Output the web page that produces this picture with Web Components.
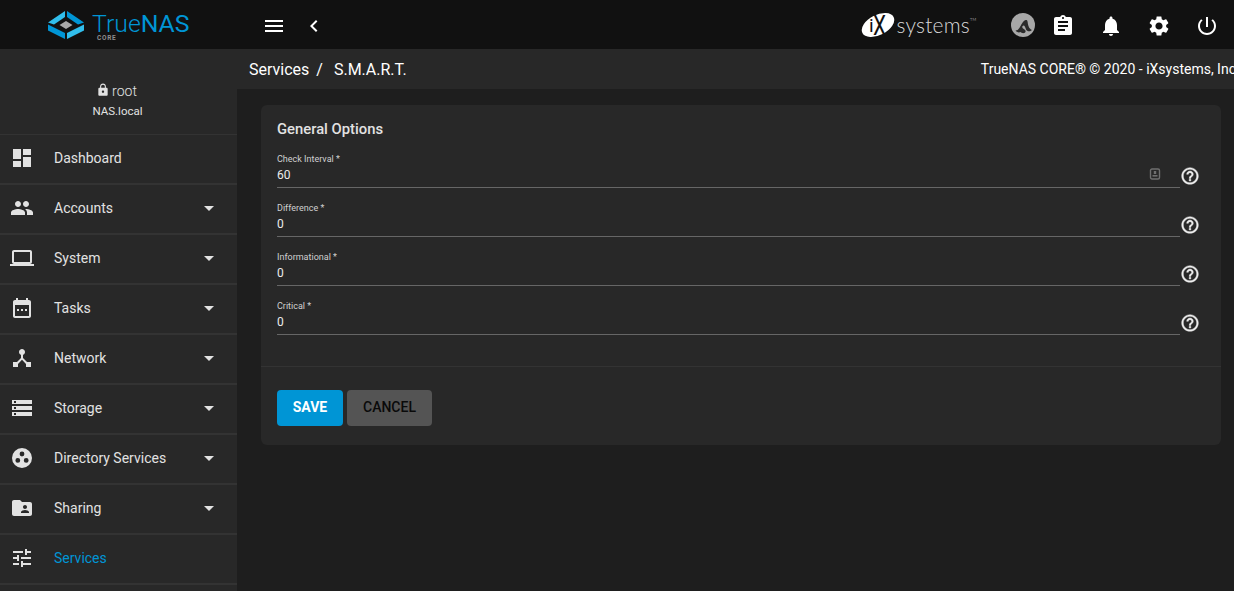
<!DOCTYPE html>
<html lang="en">
<head>
<meta charset="utf-8">
<title>TrueNAS - S.M.A.R.T.</title>
<style>
  html, body { margin: 0; height: 100%; overflow: hidden; background: #1e1e1e; }
  body { font-family: Roboto, "Liberation Sans", sans-serif; }
</style>
</head>
<body>
<app-shell>
  <top-bar slot="top"></top-bar>
  <side-nav slot="side">
    <nav-item icon="dashboard">Dashboard</nav-item>
    <nav-item icon="people" arrow>Accounts</nav-item>
    <nav-item icon="laptop" arrow>System</nav-item>
    <nav-item icon="event" arrow>Tasks</nav-item>
    <nav-item icon="hub" arrow>Network</nav-item>
    <nav-item icon="storage" arrow>Storage</nav-item>
    <nav-item icon="directory" arrow>Directory Services</nav-item>
    <nav-item icon="folder" arrow>Sharing</nav-item>
    <nav-item icon="tune" active>Services</nav-item>
  </side-nav>
  <page-header slot="head"></page-header>
  <form-card slot="body" heading="General Options">
    <form-field label="Check Interval *" value="60" badge></form-field>
    <form-field label="Difference *" value="0"></form-field>
    <form-field label="Informational *" value="0"></form-field>
    <form-field label="Critical *" value="0"></form-field>
    <form-button slot="actions" kind="primary">SAVE</form-button>
    <form-button slot="actions">CANCEL</form-button>
  </form-card>
</app-shell>

<script>
// Material icon paths used across the page
const ICONS = {
  dashboard: 'M3 13h8V3H3v10zm0 8h8v-6H3v6zm10 0h8V11h-8v10zm0-18v6h8V3h-8z',
  people: 'M16 11c1.66 0 2.99-1.34 2.99-3S17.66 5 16 5c-1.66 0-3 1.34-3 3s1.34 3 3 3zm-8 0c1.66 0 2.99-1.34 2.99-3S9.66 5 8 5C6.34 5 5 6.34 5 8s1.34 3 3 3zm0 2c-2.33 0-7 1.17-7 3.5V19h14v-2.5c0-2.33-4.67-3.5-7-3.5zm8 0c-.29 0-.62.02-.97.05 1.16.84 1.97 1.97 1.97 3.45V19h6v-2.5c0-2.33-4.67-3.5-7-3.5z',
  laptop: 'M20 18c1.1 0 1.99-.9 1.99-2L22 6c0-1.1-.9-2-2-2H4c-1.1 0-2 .9-2 2v10c0 1.1.9 2 2 2H0v2h24v-2h-4zM4 6h16v10H4V6z',
  event: 'M9 13H7v2h2v-2zm4 0h-2v2h2v-2zm4 0h-2v2h2v-2zm2-9h-1V2h-2v2H8V2H6v2H5c-1.11 0-1.99.9-1.99 2L3 20c0 1.1.89 2 2 2h14c1.1 0 2-.9 2-2V6c0-1.1-.9-2-2-2zm0 16H5V9h14v11z',
  hub: 'M17 16l-4-4V8.82C14.16 8.4 15 7.3 15 6c0-1.66-1.34-3-3-3S9 4.34 9 6c0 1.3.84 2.4 2 2.82V12l-4 4H3v5h5v-3.05l4-4.2 4 4.2V21h5v-5h-4z',
  storage: 'M2 20h20v-4H2v4zm2-3h2v2H4v-2zM2 4v4h20V4H2zm4 3H4V5h2v2zm-4 7h20v-4H2v4zm2-3h2v2H4v-2z',
  directory: 'M12 2a10 10 0 1 0 0 20 10 10 0 0 0 0-20zm0 3.6a2.4 2.4 0 1 1 0 4.8 2.4 2.4 0 0 1 0-4.8zM7.8 12a2.4 2.4 0 1 1 0 4.8 2.4 2.4 0 0 1 0-4.8zm8.4 0a2.4 2.4 0 1 1 0 4.8 2.4 2.4 0 0 1 0-4.8z',
  folder: 'M20 6h-8l-2-2H4c-1.1 0-1.99.9-1.99 2L2 18c0 1.1.9 2 2 2h16c1.1 0 2-.9 2-2V8c0-1.1-.9-2-2-2zm-5 3c1.1 0 2 .9 2 2s-.9 2-2 2-2-.9-2-2 .9-2 2-2zm4 8h-8v-1c0-1.33 2.67-2 4-2s4 .67 4 2v1z',
  tune: 'M3 17v2h6v-2H3zM3 5v2h10V5H3zm10 16v-2h8v-2h-8v-2h-2v6h2zM7 9v2H3v2h4v2h2V9H7zm14 4v-2H11v2h10zm-6-4h2V7h4V5h-4V3h-2v6z',
  menu: 'M3 18h18v-2H3v2zm0-5h18v-2H3v2zm0-7v2h18V6H3z',
  back: 'M15.41 7.41L14 6l-6 6 6 6 1.41-1.41L10.83 12z',
  assignment: 'M19 3h-4.18C14.4 1.84 13.3 1 12 1c-1.3 0-2.4.84-2.82 2H5c-1.1 0-2 .9-2 2v14c0 1.1.9 2 2 2h14c1.1 0 2-.9 2-2V5c0-1.1-.9-2-2-2zm-7 0c.55 0 1 .45 1 1s-.45 1-1 1-1-.45-1-1 .45-1 1-1zm2 14H7v-2h7v2zm3-4H7v-2h10v2zm0-4H7V7h10v2z',
  bell: 'M12 22c1.1 0 2-.9 2-2h-4c0 1.1.89 2 2 2zm6-6v-5c0-3.07-1.64-5.64-4.5-6.32V4c0-.83-.67-1.5-1.5-1.5s-1.5.67-1.5 1.5v.68C7.63 5.36 6 7.92 6 11v5l-2 2v1h16v-1l-2-2z',
  gear: 'M19.14 12.94c.04-.3.06-.61.06-.94 0-.32-.02-.64-.07-.94l2.03-1.58c.18-.14.23-.41.12-.61l-1.92-3.32c-.12-.22-.37-.29-.59-.22l-2.39.96c-.5-.38-1.03-.7-1.62-.94l-.36-2.54c-.04-.24-.24-.41-.48-.41h-3.84c-.24 0-.43.17-.47.41l-.36 2.54c-.59.24-1.13.57-1.62.94l-2.39-.96c-.22-.08-.47 0-.59.22L2.74 8.87c-.12.21-.08.47.12.61l2.03 1.58c-.05.3-.09.63-.09.94s.02.64.07.94l-2.03 1.58c-.18.14-.23.41-.12.61l1.92 3.32c.12.22.37.29.59.22l2.39-.96c.5.38 1.03.7 1.62.94l.36 2.54c.05.24.24.41.48.41h3.84c.24 0 .44-.17.47-.41l.36-2.54c.59-.24 1.13-.56 1.62-.94l2.39.96c.22.08.47 0 .59-.22l1.92-3.32c.12-.22.07-.47-.12-.61l-2.01-1.58zM12 15.6c-1.98 0-3.6-1.62-3.6-3.6s1.62-3.6 3.6-3.6 3.6 1.62 3.6 3.6-1.62 3.6-3.6 3.6z',
  power: 'M13 3h-2v10h2V3zm4.83 2.17l-1.42 1.42C17.99 7.86 19 9.81 19 12c0 3.87-3.13 7-7 7s-7-3.13-7-7c0-2.19 1.01-4.14 2.58-5.42L6.17 5.17C4.23 6.82 3 9.26 3 12c0 4.97 4.03 9 9 9s9-4.03 9-9c0-2.74-1.23-5.18-3.17-6.83z',
  lock: 'M18 8h-1V6c0-2.76-2.24-5-5-5S7 3.24 7 6v2H6c-1.1 0-2 .9-2 2v10c0 1.1.9 2 2 2h12c1.1 0 2-.9 2-2V10c0-1.1-.9-2-2-2zm-6 9c-1.1 0-2-.9-2-2s.9-2 2-2 2 .9 2 2-.9 2-2 2zm3.1-9H8.9V6c0-1.71 1.39-3.1 3.1-3.1 1.71 0 3.1 1.39 3.1 3.1v2z',
  help: 'M11 18h2v-2h-2v2zm1-16C6.48 2 2 6.48 2 12s4.48 10 10 10 10-4.48 10-10S17.52 2 12 2zm0 18c-4.41 0-8-3.59-8-8s3.59-8 8-8 8 3.59 8 8-3.59 8-8 8zm0-14c-2.21 0-4 1.79-4 4h2c0-1.1.9-2 2-2s2 .9 2 2c0 2-3 1.75-3 5h2c0-2.25 3-2.5 3-5 0-2.21-1.79-4-4-4z'
};

const icon = (name, size = 24) =>
  `<svg width="${size}" height="${size}" viewBox="0 0 24 24" fill="currentColor" style="display:block;flex:none"><path d="${ICONS[name]}"/></svg>`;

class AppShell extends HTMLElement {
  constructor() {
    super();
    this.attachShadow({ mode: 'open' });
    this.shadowRoot.innerHTML = `
      <style>
        :host { display: grid; grid-template-columns: 237px 1fr; grid-template-rows: 49px 40px 1fr; height: 100vh; overflow: hidden; }
        .top { grid-column: 1 / 3; }
        .side { grid-row: 2 / 4; min-height: 0; overflow: hidden; }
        .head { min-width: 0; overflow: hidden; }
        .body { padding: 16px 13px 0 24px; min-width: 0; }
      </style>
      <div class="top"><slot name="top"></slot></div>
      <div class="side"><slot name="side"></slot></div>
      <div class="head"><slot name="head"></slot></div>
      <div class="body"><slot name="body"></slot></div>
    `;
  }
}

class TopBar extends HTMLElement {
  constructor() {
    super();
    this.attachShadow({ mode: 'open' });
    this.shadowRoot.innerHTML = `
      <style>
        :host { display: flex; align-items: center; height: 49px; background: #111; color: #fff; padding: 0 15px 0 48px; box-sizing: border-box; }
        .brand { display: flex; align-items: center; width: 214px; gap: 8px; }
        .word { position: relative; font-size: 24.8px; font-weight: 300; color: #0095d5; line-height: 22px; top: -1px; white-space: nowrap; }
        .word b { font-weight: 400; }
        .word i { position: absolute; left: 5px; top: 22px; font: 700 6.5px/6px Roboto, sans-serif; letter-spacing: .7px; color: #8e8e8e; }
        .nav { display: flex; gap: 16px; margin-top: 3px; }
        .ix { margin-left: auto; display: flex; align-items: center; gap: 2px; margin-right: 41px; }
        .ix span { font: 300 21px/26px Lato, sans-serif; color: #d8d8d8; letter-spacing: .2px; position: relative; }
        .ix sup { font-size: 4px; line-height: 4px; position: absolute; top: 6px; left: 100%; }
        .tools { display: flex; align-items: center; gap: 24px; margin-top: 3px; }
        .nas { margin: -2px -8px 0 0; }
      </style>
      <div class="brand">
        <svg width="36" height="28" viewBox="0 0 36 28">
          <polygon points="17,0 17,6 6,13.500 0,11.500" fill="#31beec"/>
          <polygon points="19,0 36,11.500 30,13.500 19,6" fill="#0095d5"/>
          <polygon points="0,13.500 17,22 17,28 0,19.500" fill="#0095d5"/>
          <polygon points="36,13.500 19,22 19,28 36,19.500" fill="#31beec"/>
          <polygon points="18,10 24.500,14 18,18 11.500,14" fill="#a9a9a9"/>
        </svg>
        <div class="word">True<b>NAS</b><i>CORE</i></div>
      </div>
      <div class="nav">${icon('menu')}${icon('back')}</div>
      <div class="ix">
        <svg width="34" height="26" viewBox="0 0 34 26">
          <ellipse cx="17" cy="13" rx="17.500" ry="10" transform="rotate(-27 17 13)" fill="#fff"/>
          <text x="8" y="19.500" font-family="Roboto, sans-serif" font-size="19" fill="#111">i</text>
          <text x="12" y="22.500" font-family="Roboto, sans-serif" font-size="28" textLength="13" lengthAdjust="spacingAndGlyphs" fill="#111">X</text>
        </svg>
        <span>systems<sup>TM</sup></span>
      </div>
      <div class="tools">
        <svg class="nas" width="24" height="24" viewBox="0 0 24 24">
          <circle cx="12" cy="12" r="12" fill="#a8a8a8"/>
          <path transform="translate(0 1.500)" d="M4.500 16C8 16 9 12 11 9C12.500 6.500 14 5 15.500 5.500C17 6 16.500 9 17.500 11.500C18 13.500 19.500 15 21 15.500C19 17.500 16 17 15 15C14.500 13.500 14 11.500 13 11C11.500 10.500 10.500 13 12 14C13.500 15 15 15.500 14.500 17.500C13 19.500 10.500 18.500 9.500 17.500C8 18.500 6 18 4.500 16Z" fill="#2a2a2a"/>
        </svg>
        ${icon('assignment')}${icon('bell')}${icon('gear')}${icon('power')}
      </div>
    `;
  }
}

class SideNav extends HTMLElement {
  constructor() {
    super();
    this.attachShadow({ mode: 'open' });
    this.shadowRoot.innerHTML = `
      <style>
        :host { display: block; height: 100%; background: #282828; color: #e2e2e2; }
        .user { height: 86px; box-sizing: border-box; border-bottom: 1px solid #333; text-align: center; padding-top: 32px; }
        .name { display: flex; justify-content: center; align-items: center; gap: 2px; font-size: 14px; font-weight: 300; line-height: 20px; margin-right: 4px; }
        .name svg { margin-bottom: 3px; }
        .host { font-size: 11.5px; line-height: 20px; padding-right: 2px; }
      </style>
      <div class="user">
        <div class="name">${icon('lock', 14)}<span>root</span></div>
        <div class="host">NAS.local</div>
      </div>
      <slot></slot>
    `;
  }
}

class NavItem extends HTMLElement {
  constructor() {
    super();
    this.attachShadow({ mode: 'open' });
  }

  connectedCallback() {
    const arrow = this.hasAttribute('arrow') ? '<i class="arrow"></i>' : '';
    this.shadowRoot.innerHTML = `
      <style>
        :host { display: flex; align-items: center; height: 50px; box-sizing: border-box; border-bottom: 2px solid #333; padding: 0 23px 2px 10px; font-size: 14px; color: #e2e2e2; }
        :host([active]) .label { color: #0095d5; }
        .label { margin-left: 20px; flex: 1; }
        .arrow { width: 0; height: 0; border: 5px solid transparent; border-top-color: #e2e2e2; border-bottom: 0; }
      </style>
      ${icon(this.getAttribute('icon'))}
      <span class="label"><slot></slot></span>
      ${arrow}
    `;
  }
}

class PageHeader extends HTMLElement {
  constructor() {
    super();
    this.attachShadow({ mode: 'open' });
    this.shadowRoot.innerHTML = `
      <style>
        :host { display: flex; align-items: center; height: 40px; background: #282828; color: #fff; padding-left: 12px; font-size: 16px; white-space: nowrap; }
        .sep { margin: 0 11px 0 7px; }
        .copy { margin-left: auto; font-size: 14px; margin-right: -2px; }
      </style>
      <span>Services</span><span class="sep">/</span><span>S.M.A.R.T.</span>
      <span class="copy">TrueNAS CORE® © 2020 - iXsystems, Inc</span>
    `;
  }
}

class FormCard extends HTMLElement {
  constructor() {
    super();
    this.attachShadow({ mode: 'open' });
  }

  connectedCallback() {
    this.shadowRoot.innerHTML = `
      <style>
        :host { display: block; width: 960px; height: 340px; box-sizing: border-box; background: #282828; border-radius: 6px; color: #e2e2e2; }
        h3 { margin: 0; padding: 15px 16px 0; font-size: 14.8px; font-weight: 500; line-height: 18px; }
        .fields { padding: 13px 16px 0; height: 229px; box-sizing: border-box; border-bottom: 1px solid #333; }
        .actions { display: flex; gap: 4px; padding: 23px 16px 0; }
      </style>
      <h3>${this.getAttribute('heading')}</h3>
      <div class="fields"><slot></slot></div>
      <div class="actions"><slot name="actions"></slot></div>
    `;
  }
}

class FormField extends HTMLElement {
  constructor() {
    super();
    this.attachShadow({ mode: 'open' });
  }

  connectedCallback() {
    const badge = this.hasAttribute('badge') ? `
      <svg class="badge" width="12" height="12" viewBox="0 0 12 12">
        <rect x="1.500" y="1" width="9" height="10" rx="1.500" fill="none" stroke="#6f6f6f" stroke-width="1.400"/>
        <rect x="4.800" y="3" width="2.400" height="3" fill="#6f6f6f"/>
        <rect x="3.500" y="7" width="5" height="1.600" fill="#6f6f6f"/>
      </svg>` : '';
    this.shadowRoot.innerHTML = `
      <style>
        :host { display: flex; height: 49px; position: relative; }
        .input { width: 903px; box-sizing: border-box; height: 37px; border-bottom: 1px solid #666; position: relative; }
        label { display: block; font-size: 9px; line-height: 12px; padding-top: 2px; color: #d0d0d0; }
        .value { font-size: 12px; line-height: 14px; padding-top: 3px; color: #ececec; }
        .badge { position: absolute; right: 19px; top: 17px; }
        .help { margin: 15px 0 0 0; color: #eee; }
        .help svg { stroke: currentColor; stroke-width: .5; }
      </style>
      <div class="input">
        <label>${this.getAttribute('label')}</label>
        <div class="value">${this.getAttribute('value')}</div>
        ${badge}
      </div>
      <div class="help">${icon('help', 20)}</div>
    `;
  }
}

class FormButton extends HTMLElement {
  constructor() {
    super();
    this.attachShadow({ mode: 'open' });
    this.shadowRoot.innerHTML = `
      <style>
        :host { display: flex; align-items: center; justify-content: center; width: 85px; height: 36px; box-sizing: border-box; padding-bottom: 2px; border-radius: 4px; background: #545454; color: #0a0a0a; font-size: 14px; font-weight: 500; }
        :host([kind="primary"]) { width: 66px; background: #0095d5; color: #fff; font-weight: 700; }
      </style>
      <slot></slot>
    `;
  }
}

customElements.define('app-shell', AppShell);
customElements.define('top-bar', TopBar);
customElements.define('side-nav', SideNav);
customElements.define('nav-item', NavItem);
customElements.define('page-header', PageHeader);
customElements.define('form-card', FormCard);
customElements.define('form-field', FormField);
customElements.define('form-button', FormButton);
</script>
</body>
</html>
